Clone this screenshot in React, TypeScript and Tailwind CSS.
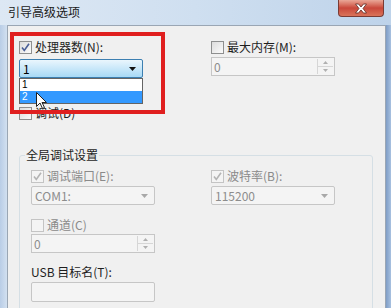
import React from "react";

const font = { fontFamily: '"Noto Sans CJK SC", "Noto Sans", sans-serif' };
const latin = { fontFamily: '"Liberation Sans", sans-serif' };

function Check({ checked, disabled }: { checked?: boolean; disabled?: boolean }) {
  return (
    <span
      className={
        "relative inline-block w-[13px] h-[13px] shrink-0 border " +
        (disabled
          ? "border-[#c4c4c4] bg-[#f4f4f4]"
          : "border-[#8e8f8f] bg-gradient-to-br from-[#dcdcdc] to-[#fbfbfb]")
      }
    >
      {checked && (
        <svg viewBox="0 0 11 11" className="absolute left-0 top-0 w-[11px] h-[11px]">
          <path
            d="M2 5.5 L4.3 8.5 L9 1.8"
            fill="none"
            stroke={disabled ? "#b4b4b4" : "#4a5f97"}
            strokeWidth="1.6"
          />
        </svg>
      )}
    </span>
  );
}

function Label({
  text,
  checked,
  disabled,
  dim,
}: {
  text: string;
  checked?: boolean;
  disabled?: boolean;
  dim?: boolean;
}) {
  return (
    <div className="flex items-center gap-[3px] h-[14px]">
      <Check checked={checked} disabled={disabled} />
      <span className={"text-[12px] leading-[14px] " + (dim ? "text-[#8a8a8a]" : "text-[#1e1e1e]")}>
        {text}
      </span>
    </div>
  );
}

function Combo({ value }: { value: string }) {
  return (
    <div className="flex items-center justify-between w-[124px] h-[19px] border border-[#c6c6c6] rounded-[2px] bg-[#f4f4f4] px-[3px]">
      <span className="text-[12px] leading-none text-[#8d8d8d]">{value}</span>
      <svg viewBox="0 0 7 4" className="w-[7px] h-[4px] mr-[3px]">
        <path d="M0 0 H7 L3.5 4 Z" fill="#a8a8a8" />
      </svg>
    </div>
  );
}

function Spin({ value }: { value: string }) {
  return (
    <div className="flex w-[124px] h-[19px] border border-[#c6c6c6] bg-[#f4f4f4]">
      <span className="flex-1 text-[12px] leading-[17px] pl-[2px] text-[#8d8d8d]">{value}</span>
      <div className="flex flex-col w-[16px] border-l border-[#d6d6d6] my-[1px] mr-[1px]">
        <div className="flex-1 flex items-center justify-center border-b border-[#d6d6d6]">
          <svg viewBox="0 0 5 3" className="w-[5px] h-[3px]">
            <path d="M0 3 L2.5 0 L5 3 Z" fill="#b0b0b0" />
          </svg>
        </div>
        <div className="flex-1 flex items-center justify-center">
          <svg viewBox="0 0 5 3" className="w-[5px] h-[3px]">
            <path d="M0 0 L2.5 3 L5 0 Z" fill="#b0b0b0" />
          </svg>
        </div>
      </div>
    </div>
  );
}

export default function App() {
  return (
    <div
      className="relative w-[391px] h-[308px] overflow-hidden bg-gradient-to-b from-[#c3d6ec] to-[#b6cbe6]"
      style={font}
    >
      {/* title bar */}
      <div className="flex items-start h-[25px] bg-gradient-to-r from-[#dde8f4] via-[#cfdff0] to-[#bed3ea]">
        <span className="pl-[8px] pt-[5px] text-[12px] leading-[14px] text-[#1a1a1a]">引导高级选项</span>
        <div className="ml-auto mr-[7px] w-[46px] h-[17px] rounded-b-[4px] border border-t-0 border-[#7a3b34] bg-gradient-to-b from-[#e9a797] via-[#c9473a] to-[#d9735a] flex items-center justify-center">
          <svg viewBox="0 0 14 11" className="w-[14px] h-[11px]">
            <path
              d="M1.5 1 L5 5.5 L1.5 10 H4.5 L7 7 L9.5 10 H12.5 L9 5.5 L12.5 1 H9.5 L7 4 L4.5 1 Z"
              fill="#ffffff"
              stroke="#5a2a22"
              strokeWidth="0.8"
            />
          </svg>
        </div>
      </div>

      {/* body */}
      <div className="flex h-[283px]">
        <div className="w-[7px] bg-gradient-to-r from-[#b9cde6] to-[#d2e0f0]" />
        <div className="flex-1 bg-[#f0f0f0] border-t border-l border-[#9aa6b4] pl-[11px] pt-[14px]">
          {/* top rows */}
          <div className="flex gap-[68px]">
            <div className="flex flex-col w-[124px] relative">
              <Label text="处理器数(N):" checked />
              <div className="mt-[5px] flex items-center justify-between w-[124px] h-[19px] border border-[#3c7fb1] rounded-[2px] bg-gradient-to-b from-[#eaf6fd] to-[#a7d9f5] px-[3px]">
                <span className="text-[12px] leading-none text-black">1</span>
                <svg viewBox="0 0 7 4" className="w-[7px] h-[4px] mr-[3px]">
                  <path d="M0 0 H7 L3.5 4 Z" fill="#111" />
                </svg>
              </div>
              <div className="mt-[28px]">
                <Label text="调试(D)" />
              </div>
              {/* dropdown list */}
              <div className="absolute left-0 top-[38px] w-[124px] h-[26px] bg-white border border-[#646464] flex flex-col">
                <div className="h-[12px] flex items-center pl-[2px]">
                  <span className="text-[10px] leading-[10px] text-black" style={latin}>1</span>
                </div>
                <div className="h-[12px] flex items-center bg-[#3399ff] pl-[2px]">
                  <span className="text-[10px] leading-[10px] text-white" style={latin}>2</span>
                </div>
              </div>
            </div>
            <div className="flex flex-col w-[124px]">
              <Label text="最大内存(M):" />
              <div className="mt-[3px]">
                <Spin value="0" />
              </div>
            </div>
          </div>

          {/* group box */}
          <div className="relative mt-[35px] w-[354px] h-[200px] border border-[#d5dfe5] rounded-[3px] pl-[11px] pt-[13px]">
            <span className="absolute left-[5px] top-[-9px] bg-[#f0f0f0] px-[1px] text-[12px] leading-[16px] text-[#1e1e1e]">
              全局调试设置
            </span>
            <div className="flex gap-[56px]">
              <div className="flex flex-col w-[124px]">
                <Label text="调试端口(E):" checked disabled dim />
                <div className="mt-[3px]">
                  <Combo value="COM1:" />
                </div>
                <div className="mt-[13px]">
                  <Label text="通道(C)" disabled dim />
                </div>
                <div className="mt-[2px]">
                  <Spin value="0" />
                </div>
                <span className="mt-[12px] text-[12px] leading-[14px] text-[#1e1e1e]">USB 目标名(T):</span>
                <div className="mt-[3px] w-[124px] h-[20px] border border-[#c6c6c6] rounded-[2px] bg-[#f4f4f4]" />
              </div>
              <div className="flex flex-col w-[124px]">
                <Label text="波特率(B):" checked disabled dim />
                <div className="mt-[3px]">
                  <Combo value="115200" />
                </div>
              </div>
            </div>
          </div>
        </div>
        <div className="w-[6px] bg-gradient-to-r from-[#7f9dc6] to-[#a8c1e0] border-l border-[#9aa6b4]" />
      </div>

      {/* red annotation box */}
      <div className="absolute left-[10px] top-[32px] w-[155px] h-[82px] border-[4px] border-[#e01f1f]" />

      {/* mouse cursor */}
      <svg className="absolute left-[36px] top-[92px]" width="12" height="18" viewBox="0 0 12 18">
        <path d="M0.5 0.5 V14.5 L4 11 L6.5 16.5 L8.5 15.5 L6 10.5 H10.5 Z" fill="#fff" stroke="#222" strokeWidth="1" />
      </svg>
    </div>
  );
}
